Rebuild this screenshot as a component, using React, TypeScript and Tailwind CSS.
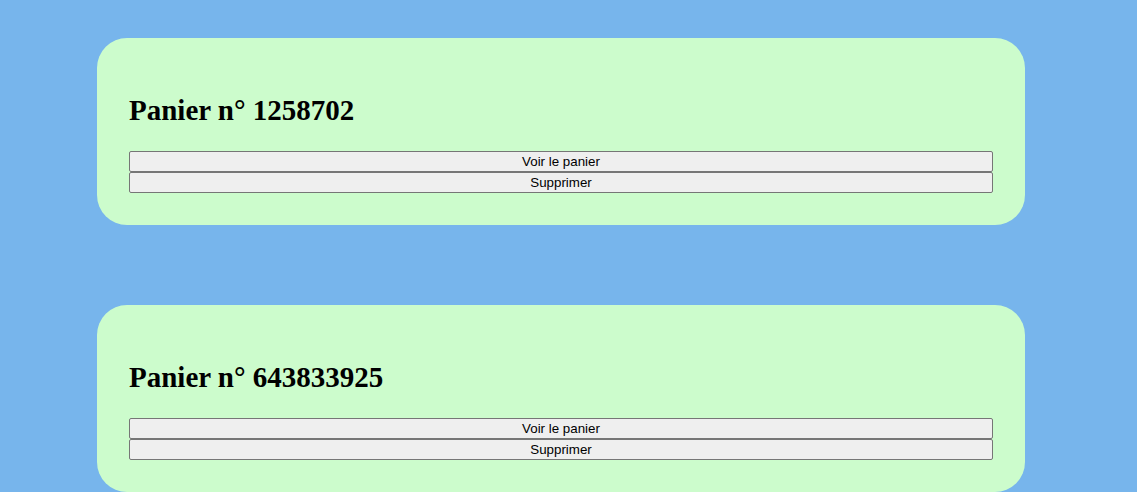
import React from 'react';

const PANIERS = [1258702, 643833925];

const App: React.FC = () => {
  return (
    <div className="min-h-screen bg-[#77b5ec] pt-[38px] pb-10">
      <div className="flex flex-col gap-[80px] w-[928px] ml-[97px]">
        {PANIERS.map((id) => (
          <div key={id} className="bg-[#ccfccc] rounded-[30px] p-8">
            <h2 className="font-['Liberation_Serif',serif] font-bold text-[29px] leading-[33px] my-6 text-black">
              Panier n° {id}
            </h2>
            <div className="flex flex-col font-['Liberation_Sans',Arial,sans-serif] text-[13.33px]">
              <button className="h-[21px] bg-[#efefef] border border-[#767676] rounded-[2px] text-black leading-none">
                Voir le panier
              </button>
              <button className="h-[21px] bg-[#efefef] border border-[#767676] rounded-[2px] text-black leading-none">
                Supprimer
              </button>
            </div>
          </div>
        ))}
      </div>
    </div>
  );
};

export default App;
